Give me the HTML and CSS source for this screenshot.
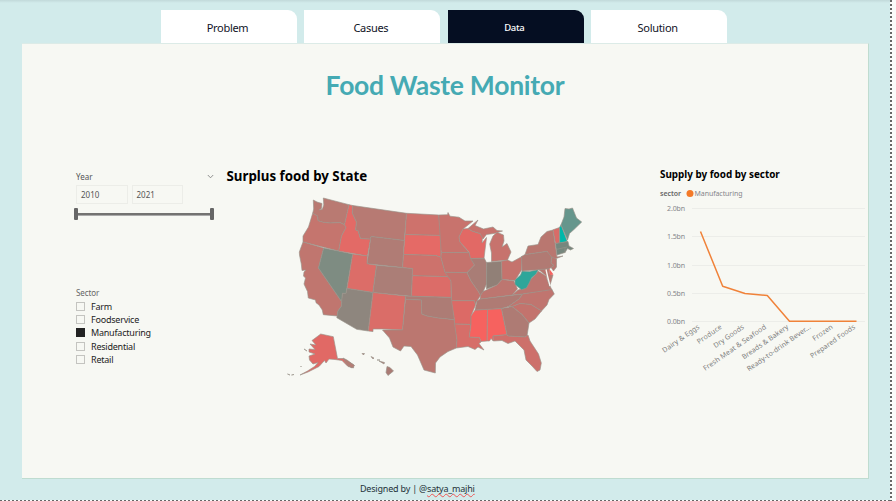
FILE: index.html
```html
<!DOCTYPE html>
<html lang="en">
<head>
<meta charset="utf-8">
<title>Food Waste Monitor</title>
<link rel="stylesheet" href="styles.css">
</head>
<body>
<div class="page">
  <nav class="tabs">
    <a class="tab">Problem</a>
    <a class="tab">Casues</a>
    <a class="tab active">Data</a>
    <a class="tab">Solution</a>
  </nav>
  <main class="report">
    <h1><span>Food Waste Monitor</span></h1>
    <div class="columns">
      <aside class="filters">
        <section class="year">
          <div class="year-head"><span>Year</span>
            <svg class="chevron" width="7" height="5" viewBox="0 0 7 5"><path d="M.8 1 3.5 3.8 6.2 1"/></svg>
          </div>
          <div class="year-inputs"><span>2010</span><span>2021</span></div>
          <div class="slider"><i></i><b></b><i></i></div>
        </section>
        <section class="sector">
          <div class="sector-head">Sector</div>
          <ul>
            <li><i></i><span>Farm</span></li>
            <li><i></i><span>Foodservice</span></li>
            <li class="checked"><i></i><span>Manufacturing</span></li>
            <li><i></i><span>Residential</span></li>
            <li><i></i><span>Retail</span></li>
          </ul>
        </section>
      </aside>
      <section class="map">
        <h2>Surplus food by State</h2>
        <svg width="310" height="190" viewBox="280 190 310 190">
          <g class="states">
            <path fill="#b97a72" d="M313.3 200 317 202 322 203.5 321.5 208.5 319 210 322.3 209.3 323.8 205 323.3 198 349 204.7 344.5 224.7 340 222.6 330 223 323.3 222.3 318 220.7 317.5 216 312.7 213.3 313.7 209Z"/>
            <path fill="#c5756e" d="M312.7 213.3 317.5 216 318 220.7 323.3 222.3 330 223 340 222.6 344.5 224.7 346 227.5 341.5 236 338.7 251 303 242 303 236 308.5 227Z"/>
            <path fill="#c0766f" d="M303 242 323.7 248 318.5 268 341.7 301.7 341.5 306 338 311 337.3 316 323.3 314.7 322.3 310 319 305 316 302.7 315.5 300 308.3 298 307.5 291.5 304 284 305.5 278 303.5 276 304 272 306 270 302 270.5 301.3 264 299.5 255 299.3 252Z"/>
            <path fill="#7e8c82" d="M323.7 248 352.7 254 346 293.5 342.5 293.3 341.7 301.7 318.5 268Z"/>
            <path fill="#e36a66" d="M349 204.7 352.7 205.5 352.3 213 356.5 222 355.7 230 358 230.5 360.5 238.5 370.5 239 367.5 256 338.7 251 341.5 236 346 227.5 344.5 224.7Z"/>
            <path fill="#b77a73" d="M352.7 205.5 406.5 213.3 404.3 240.5 371 236.5 370.5 239 360.5 238.5 358 230.5 355.7 230 356.5 222 352.3 213Z"/>
            <path fill="#b07c75" d="M371 236.5 404.3 240.5 402.6 267.5 367 263.7Z"/>
            <path fill="#dc6d68" d="M352.7 254 367.5 256 367 263.7 376.6 265.3 373 292.5 347 288.5Z"/>
            <path fill="#ab7e77" d="M376.6 265.3 412.6 268.5 411.5 296.3 373 292.5Z"/>
            <path fill="#8e867e" d="M347 288.5 373 292.5 368.3 331 356.7 329.3 336.8 317.7 338 311 341.5 306 341.7 301.7 342.5 293.3 346 293.5Z"/>
            <path fill="#da6d68" d="M373 292.5 405.5 296 402.6 330 382.5 329 373 329 373 331.6 368.3 331Z"/>
            <path fill="#ce726c" d="M406.5 213.3 438.7 215 441 235.5 405 234.5Z"/>
            <path fill="#e56a66" d="M405 234.5 441 235.5 441 257.5 436 255.5 403.5 254.5Z"/>
            <path fill="#cd726c" d="M403.5 254.5 436 255.5 441 257.5 445 272 449 276.7 412.3 275.7 412.6 268.5 402.6 267.5Z"/>
            <path fill="#dc6c68" d="M412.3 275.7 449 276.7 451 281 451.3 297.5 411.5 296.3Z"/>
            <path fill="#ad7c75" d="M405.5 296 451.3 297.5 452.3 302 454.5 320 448 319 438 318 427 316 421.7 314 421.3 300 405.5 299.3Z"/>
            <path fill="#bb7770" d="M405.5 299.3 421.3 300 421.7 314 427 316 438 318 448 319 454.5 320 457 340 456.3 348 448 351.5 440 357 435.5 363 435.3 373 424 370 417.5 355 411 346.5 404 346 400.5 351 393 347 389.5 338 382.5 330 402.6 330Z"/>
            <path fill="#c8736d" d="M438.7 215 447.5 214.7 448 212.5 450 216.2 459 217.2 465 221 473 221 463 229 459 237 460 242 469 252.6 441.2 252.5Z"/>
            <path fill="#c5736d" d="M441.2 252.5 469 252.6 471 258.5 474.5 265 467 272.7 445 272.3 441 257.5Z"/>
            <path fill="#e26965" d="M463 229 468 228.5 472 231 480 233.5 482.5 237 482 243 486.5 237.5 484 258.3 470.5 258.5 469 252 460 242 459 237Z"/>
            <path fill="#c7736d" d="M468 228.5 478 220 475 225.5 483.5 229 493 227 497 230.5 502.5 231 494 233.5 486.5 234.5 483 239 480 233.5 472 231Z"/>
            <path fill="#c7736d" d="M497 232.3 503.5 235 504 241 502 247 507 243.5 511 252 507.5 260 491.5 261.5 491.5 253 489.7 244 493 236Z"/>
            <path fill="#a97d76" d="M470.5 258.5 484.3 258.3 486.7 263 486.5 284 483 292 480.5 295.5 478 291 471 281 467 272.7 474.5 265Z"/>
            <path fill="#918077" d="M486.7 262.5 501.5 261.3 502 279.5 497 285 486.5 289Z"/>
            <path fill="#c5736d" d="M501.5 261.3 507.5 260 512 262 522 256.5 521.5 270 515 280.5 502 279.5Z"/>
            <path fill="#c3736d" d="M445 272.3 467 272.7 471 281 478 291 480.5 295.5 477 301 475 304.5 474.3 300.7 451.5 300.7 451 281Z"/>
            <path fill="#dc6a66" d="M451.5 300.7 474.3 300.7 475.5 305 471 316 471 324.5 454.5 324 454.5 320Z"/>
            <path fill="#d66e69" d="M454.5 324 471 324.5 469.3 337 479.5 337.5 481 342 479 343.5 484 350 478 347 475 349.5 468 346.5 456.3 348 457 340Z"/>
            <path fill="#f6625f" d="M475 310 487.5 309.3 487.2 341 481 341.5 479.5 337.5 469.3 337 471 324.5 471 316Z"/>
            <path fill="#f6625f" d="M487.5 309.3 501.5 308.5 507 334.7 493 336 493.3 341 491 338.5 489.5 341 487.2 341Z"/>
            <path fill="#af7b74" d="M480 299 522.8 294 519 299 508.5 306.5 501.5 308.5 475 310 477 301Z"/>
            <path fill="#bd7670" d="M480.5 295.5 483 291.5 497 285 502 279.5 514 281 517.5 289 512 295 480 299Z"/>
            <path fill="#bc7670" d="M536 274 538 271 546 276 548 282 552 290 522.8 294 512 295 518 290 526.5 287.5 529 281Z"/>
            <path fill="#2ea69a" d="M522 271 529.5 271.5 538.5 269.5 536 274 531.5 278 529.2 283 526.5 288 521.5 289.8 515 284.5 515 280 520.5 275Z"/>
            <path fill="#b17a73" d="M521.5 256.5 525 254.5 547 251.3 552 256.5 551 263 554 265.5 549 269 522 271Z"/>
            <path fill="#b97770" d="M525 254.5 528 246 538 244.5 541 237 547 231.5 553 230 555 243 557 257 563 256 553.5 259.5 547 251.3Z"/>
            <path fill="#d96c68" d="M553 229.8 559.5 227.5 559.7 243 555.5 243.5Z"/>
            <path fill="#00b8aa" d="M559.5 227.5 561 224.8 567.3 241.5 559.7 243.2Z"/>
            <path fill="#66968c" d="M561 224.8 564 217 565 208.5 569 209 572.5 208 576.5 218 581.7 222 574.5 229 569.5 233.5 567.5 240Z"/>
            <path fill="#76877e" d="M555.5 243.5 568 241.5 569 246 573.5 248.5 570.5 250 567.5 248.5 565 252.5 557 255Z"/>
            <path fill="none" d="M556 249.5 567 247M565 248V253"/>
            <path fill="#b97770" d="M552 257 556.5 259 556.5 267 553.5 271 551 267.5 554 265.5 551 263Z"/>
            <path fill="#b97770" d="M538.5 269.5 549 269 550 274.5 553 275 549.5 287 548 280 546.5 276Z"/>
            <path fill="#f6625f" stroke="none" d="M549 268.5 553.5 274.5 550 275Z"/>
            <path fill="#c0756f" d="M522.8 294 552 289.5 554.3 294 549 299.5 547 305 541.5 311 531 304.5 520 303.5 512 306.5 508.5 306.5 519 299Z"/>
            <path fill="#c3736d" d="M512 306.5 520 303.5 531 304.5 541.5 311 535 319 529 323 522 314.5Z"/>
            <path fill="#ae7b74" d="M501.5 308.5 512 306.5 522 314.5 529 323 527 336 525 337 508 336 507 334.7Z"/>
            <path fill="#cd706b" d="M493 336 507 334.7 508 336 525 337 528 335 530 341 538.5 354 541.3 363 540 370 537 371.5 532 366 526 360 524 350 515 341 508 343.5 502 340.5 493.3 341Z"/>
            <path fill="#e16965" d="M320.7 334 333.3 336.7 337.5 358.5 343 358.5 354 365 353.5 368 348 366.5 342 360.5 335 359.5 329 359 326 363 324.5 360.5 319 366.5 308 372 300 375 307.5 371 314.5 366.5 318 362.5 313 364 309.5 360 309 356 315 354 309 352 309 349 315 349.5 310 344 316 345 312 340.5Z"/>
            <path fill="#b47d75" d="M343 358 347 360 354.5 365.5 352 368 347 365ZM304 349 307 351ZM287.5 374 290 375ZM291.5 375 294 374.5ZM300.5 366 301.5 367Z"/>
            <path fill="#aa7b74" d="M362 353.5 364.5 353.5 363.5 355ZM371 356.5 374 358 373 359ZM377 360 380 360ZM379 361 384.5 362.5 384 364ZM387 366.5 390 367.5 393.5 371 388 375.5 386 372.5Z"/>
          </g>
          <path class="lake-line" d="M546 269.5 547.5 276 550 286"/>
        </svg>
      </section>
      <section class="supply">
        <h2>Supply by food by sector</h2>
        <svg width="220" height="200" viewBox="650 184 220 200">
          <text class="legend strong" x="660" y="196" textLength="21">sector</text>
          <circle cx="690" cy="193.5" r="3.5" fill="#f47a28"/>
          <text class="legend" x="694.5" y="196" textLength="48">Manufacturing</text>
          <path class="grid" d="M692 208.5H865M692 236.5H865M692 265.5H865M692 293.5H865M692 321.5H865"/>
          <g class="axis">
            <text x="667" y="211" textLength="18">2.0bn</text>
            <text x="667" y="239.3" textLength="18">1.5bn</text>
            <text x="667" y="268" textLength="18">1.0bn</text>
            <text x="667" y="296" textLength="18">0.5bn</text>
            <text x="667" y="324" textLength="18">0.0bn</text>
          </g>
          <path class="series" d="M700.5 231.5 722.7 286.3 745 293.5 767.3 295.5 789.5 321.3H856.5"/>
          <g class="axis cats">
            <text transform="translate(700 328) rotate(-35)" textLength="43.5">Dairy &amp; Eggs</text>
            <text transform="translate(722.3 328) rotate(-35)" textLength="28.5">Produce</text>
            <text transform="translate(744.5 328) rotate(-35)" textLength="35.5">Dry Goods</text>
            <text transform="translate(766.7 328) rotate(-35)" textLength="75">Fresh Meat &amp; Seafood</text>
            <text transform="translate(789 328) rotate(-35)" textLength="55">Breads &amp; Bakery</text>
            <text transform="translate(811.2 328) rotate(-35)" textLength="76">Ready-to-drink Bever...</text>
            <text transform="translate(833.4 328) rotate(-35)" textLength="23">Frozen</text>
            <text transform="translate(855.7 328) rotate(-35)" textLength="53">Prepared Foods</text>
          </g>
        </svg>
      </section>
    </div>
  </main>
  <footer>Designed by | @<span>satya_majhi</span></footer>
</div>
</body>
</html>
```
FILE: styles.css
```css
* { box-sizing: border-box; }
body {
  margin: 0;
  width: 896px;
  height: 501px;
  overflow: hidden;
  background: repeating-linear-gradient(to bottom, #666 0 2px, #fafafa 2px 4px) 890px 0 / 2px 100% no-repeat, #fafafa;
  font-family: "Noto Sans", "Open Sans", sans-serif;
}
.page {
  width: 890px;
  height: 501px;
  padding: 10px 0 0 22px;
  background:
    linear-gradient(#c2d9da, #d2ebeb) 0 0 / 100% 3px no-repeat,
    repeating-linear-gradient(to right, #666 0 2px, #fafafa 2px 4px) 0 500px / 100% 1px no-repeat,
    #d2ebeb;
}
.tabs { display: flex; gap: 7.4px; padding-left: 139px; height: 33px; }
.tab {
  width: 136px;
  height: 33px;
  border-radius: 0 9px 0 0;
  background: #fff;
  color: #10131f;
  font-size: 11px;
  letter-spacing: -.3px;
  line-height: 36px;
  text-align: center;
  padding-right: 3px;
}
.tab.active { background: #050e22; color: #fff; font-size: 9.5px; font-weight: 500; letter-spacing: -.3px; }
.report {
  width: 847px;
  height: 436px;
  background: #f7f8f3;
  border: solid #bfdcd0;
  border-width: 1px 1px 1px 0;
  border-top-color: #dcebe7;
}
h1 {
  margin: 0;
  height: 115px;
  padding-top: 22px;
  text-align: center;
  font: 700 26.5px/38px Lato, sans-serif;
  letter-spacing: -.27px;
  color: #45aab3;
}
.columns { display: flex; }
h2 { margin: 0; color: #000; font-weight: 700; white-space: nowrap; }
.filters { width: 204.5px; flex: none; padding: 12px 0 0 54px; }
.year { height: 116px; width: 138px; font-size: 8px; color: #555; }
.year-head { display: flex; justify-content: space-between; align-items: center; height: 11px; line-height: 11px; }
.chevron { fill: none; stroke: #777; stroke-width: .8; }
.year-inputs { display: flex; gap: 4px; margin-top: 3px; }
.year-inputs span {
  width: 51.5px;
  height: 19px;
  border: 1px solid #ecede8;
  padding-left: 4px;
  line-height: 18px;
}
.slider { display: flex; align-items: center; margin: 4px 0 0 -2px; height: 12px; width: 140px; }
.slider i { width: 4px; height: 12px; border-radius: 1px; background: #666; }
.slider b { flex: 1; height: 3px; background: #737371; border-bottom: 1px solid #aaa; }
.sector-head { font-size: 8px; line-height: 12px; color: #666; letter-spacing: -.1px; }
.sector ul { list-style: none; margin: 1px 0 0; padding: 0; }
.sector li {
  display: flex;
  align-items: center;
  gap: 6px;
  height: 13.2px;
  font-size: 9px;
  letter-spacing: -.22px;
  line-height: 13px;
  color: #222;
}
.sector i { width: 9px; height: 9px; border: 1px solid #c4c4c0; }
.sector .checked i { background: #222; border-color: #222; }
.map { width: 420.5px; flex: none; padding-top: 8px; }
.map h2 { font-size: 13.3px; line-height: 18px; height: 23px; }
.map svg { display: block; margin-left: 53.5px; }
.states { stroke: #999389; stroke-width: .65; stroke-linejoin: round; }
.lake-line { fill: none; stroke: #f7f8f3; stroke-width: 1.3; }
.supply { padding-top: 8px; }
.supply h2 { font-size: 9.9px; line-height: 14px; height: 17px; padding-left: 13px; }
.supply svg { display: block; margin-left: 3px; }
.supply text { font-size: 7px; fill: #85858a; }
.supply .strong { font-weight: 600; fill: #666; }
.supply .cats text { text-anchor: end; fill: #7d7d7d; }
.grid { stroke: #ecede9; stroke-width: 1; }
.series { fill: none; stroke: #f08239; stroke-width: 1.5; stroke-linejoin: round; }
footer { padding-left: 338px; font-size: 9px; letter-spacing: -.2px; line-height: 20px; color: #243238; }
footer span { text-decoration: underline wavy #e55 .5px; text-underline-offset: 1px; text-decoration-skip-ink: none; }
```
